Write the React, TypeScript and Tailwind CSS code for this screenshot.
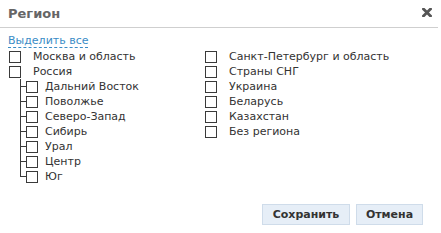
import React from "react";

const font = { fontFamily: '"DejaVu Sans", Verdana, sans-serif' };

function Box() {
  return <span className="block w-[12px] h-[12px] border border-[#3a3a3a] bg-white shrink-0" />;
}

function Row({ label }: { label: string }) {
  return (
    <div className="flex items-center h-[15px]">
      <Box />
      <span className="ml-[12px] text-[11px] leading-[15px] text-[#333]">{label}</span>
    </div>
  );
}

function ChildRow({ label, last }: { label: string; last?: boolean }) {
  return (
    <div className="flex items-center h-[15px]">
      <div className="w-[6px] h-[15px] flex flex-col shrink-0">
        <div className="h-[8px] border-l border-b border-[#3a3a3a]" />
        <div className={"flex-1 " + (last ? "" : "border-l border-[#3a3a3a]")} />
      </div>
      <Box />
      <span className="ml-[7px] text-[11px] leading-[15px] text-[#333]">{label}</span>
    </div>
  );
}

export default function App() {
  const children = ["Дальний Восток", "Поволжье", "Северо-Запад", "Сибирь", "Урал", "Центр", "Юг"];
  const right = ["Санкт-Петербург и область", "Страны СНГ", "Украина", "Беларусь", "Казахстан", "Без региона"];
  return (
    <div className="w-[441px] h-[233px] bg-white flex flex-col leading-[15px]" style={font}>
      <div className="h-[28px] mr-[3px] border-b border-[#cfcfcf] flex items-center justify-between pl-[8px] pr-[6px]">
        <span className="text-[13px] font-bold text-[#666]">Регион</span>
        <svg width="10" height="9" viewBox="0 0 10 9" className="mb-[3px]">
          <path d="M1.5 1 L8.5 8 M8.5 1 L1.5 8" stroke="#555" strokeWidth="2.8" strokeLinecap="square" />
        </svg>
      </div>
      <div className="pl-[8px] pt-[6px] flex">
        <span className="block text-[11px] leading-[13px] text-[#3a8cc6] border-b border-dashed border-[#3a8cc6]">
          Выделить все
        </span>
      </div>
      <div className="flex pl-[9px] mt-[1px]">
        <div className="w-[196px]">
          <Row label="Москва и область" />
          <Row label="Россия" />
          <div className="pl-[11px]">
            {children.map((c, i) => (
              <ChildRow key={c} label={c} last={i === children.length - 1} />
            ))}
          </div>
        </div>
        <div>
          {right.map((r) => (
            <Row key={r} label={r} />
          ))}
        </div>
      </div>
      <div className="flex-1" />
      <div className="flex justify-end gap-[6px] pr-[18px] pb-[8px]">
        <button className="h-[21px] w-[88px] bg-[#e6eef7] border border-[#cfdcea] text-[11px] font-bold text-[#333]">
          Сохранить
        </button>
        <button className="h-[21px] w-[67px] bg-[#e6eef7] border border-[#cfdcea] text-[11px] font-bold text-[#333]">
          Отмена
        </button>
      </div>
    </div>
  );
}
